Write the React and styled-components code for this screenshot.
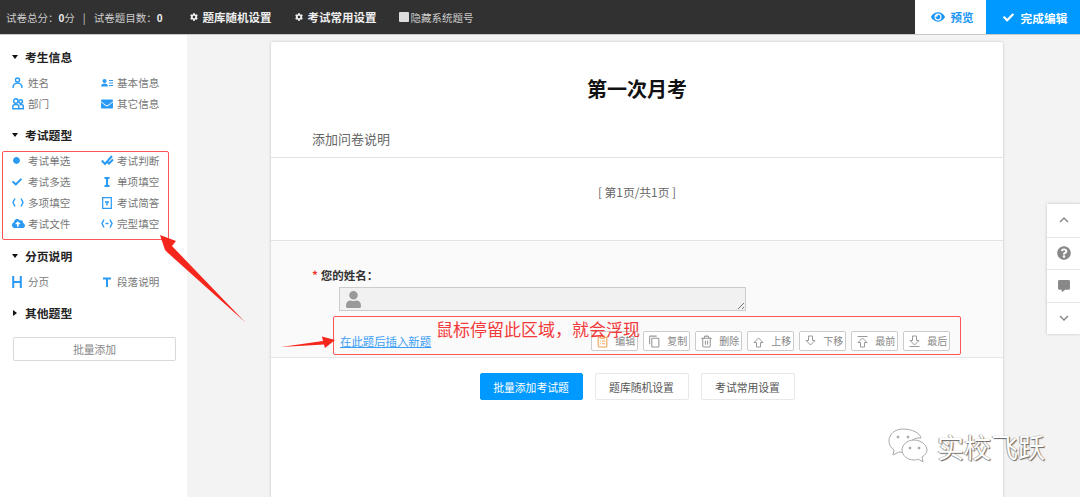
import React from "react";
import styled, { createGlobalStyle } from "styled-components";
import { FaCircle, FaCloudUploadAlt, FaEnvelope, FaCog, FaEye, FaCheck, FaUser, FaQuestionCircle, FaCommentAlt } from "react-icons/fa";
import { MdContentCopy, MdKeyboardArrowUp, MdKeyboardArrowDown } from "react-icons/md";
import { LuTrash2, LuClipboardList } from "react-icons/lu";

const Global = createGlobalStyle`
  html, body { margin: 0; padding: 0; background: #f3f3f3; }
  * { box-sizing: border-box; }
  body { font-family: "Noto Sans CJK SC", "Liberation Sans", sans-serif; }
`;
const Page = styled.div`
  position: relative; width: 1080px; height: 497px; overflow: hidden;
  display: flex; flex-direction: column; background: #f3f3f3;
`;
const TopBar = styled.header`
  height: 35px; flex: none; display: flex; align-items: center; background: #313131;
  border-bottom: 1px solid #c9c9c9; color: #ccc; font-size: 10.5px; padding-left: 6px;
`;
const Stat = styled.span`
  b { color: #eee; font-weight: 700; font-family: "Liberation Sans", sans-serif; }
`;
const Sep = styled.span` margin: 0 8px; `;
const TopLink = styled.span`
  display: inline-flex; align-items: center; gap: 5px; font-weight: 700; font-size: 11.5px; color: #eee;
  margin-left: ${p => p.$ml}px;
  svg { font-size: 8px; }
`;
const Hide = styled.span`
  display: inline-flex; align-items: center; margin-left: 22px; color: #ccc;
  i { width: 10px; height: 10px; background: #ddd; border-radius: 1px; margin-right: 2px; }
`;
const Grow = styled.div` flex: 1; `;
const Preview = styled.div`
  width: 71px; height: 34px; background: #fff; color: #1a96f5; display: flex; align-items: center; justify-content: center;
  gap: 6px; font-size: 11.5px; font-weight: 700; padding-left: 3px; svg { font-size: 14px; }
`;
const Finish = styled.div`
  width: 94px; height: 34px; background: #0099ff; color: #fff; display: flex; align-items: center; justify-content: center;
  gap: 7px; font-size: 11.7px; font-weight: 700; padding-left: 4px; svg { font-size: 11px; }
`;
const Body = styled.div` flex: 1; display: flex; min-height: 0; `;
const Sidebar = styled.aside`
  width: 187px; flex: none; background: #fff; padding: 11px 0 0 12px;
`;
const SecTitle = styled.div`
  height: 21px; display: flex; align-items: center; font-size: 11.8px; font-weight: 700; color: #222;
  margin-bottom: ${p => p.$mb ?? 5}px;
  &::before {
    content: ""; width: 0; height: 0; margin-right: 7px;
    ${p => p.$closed
      ? "border-left: 4px solid #111; border-top: 3px solid transparent; border-bottom: 3px solid transparent; margin-left: 1px; margin-right: 8px;"
      : "border-top: 4px solid #111; border-left: 3px solid transparent; border-right: 3px solid transparent;"}
  }
`;
const ItemGrid = styled.div`
  display: grid; grid-template-columns: 89px 80px; grid-auto-rows: 21px; margin-bottom: ${p => p.$mb ?? 10}px;
`;
const Item = styled.div`
  display: flex; align-items: center; font-size: 10.6px; color: #777;
`;
const Ico = styled.span`
  width: 16px; flex: none; display: flex; align-items: center; color: #2a9af5; font-size: ${p => p.$s || 11}px;
  padding-left: ${p => p.$l ?? 0}px;
`;
const BulkBtn = styled.div`
  width: 163px; height: 24px; margin: 14px 0 0 1px; border: 1px solid #d9d9d9; border-radius: 2px; background: #fff;
  display: flex; align-items: center; justify-content: center; font-size: 10.8px; color: #888;
`;
const Main = styled.main` flex: 1; padding: 7px 0 0 84px; `;
const Card = styled.section`
  width: 732px; height: 470px; background: #fff; border-radius: 2px; box-shadow: 0 0 3px rgba(0,0,0,.2);
  display: flex; flex-direction: column;
`;
const Title = styled.h1`
  margin: 31px 0 0; height: 32px; line-height: 32px; text-align: center; font-size: 20px; font-weight: 700; color: #111;
`;
const Desc = styled.div`
  height: 51px; margin-top: 2px; padding: 22px 0 0 41px; font-size: 13px; color: #666; line-height: 20px;
  border-bottom: 1px solid #e3e3e3;
`;
const PageNo = styled.div`
  height: 83px; display: flex; justify-content: center; padding-top: 25px; font-size: 11.8px; color: #666; line-height: 18px;
  border-bottom: 1px solid #e3e3e3; white-space: pre;
`;
const Question = styled.div`
  height: 117px; background: #fafafa; border-bottom: 1px solid #e6e6e6; padding: 26px 0 0 41px;
`;
const Label = styled.div`
  font-size: 11.5px; font-weight: 700; color: #333; line-height: 16px;
  em { color: #e33; font-style: normal; margin-right: 3px; }
`;
const NameBox = styled.div`
  position: relative; width: 407px; height: 24px; margin: 4px 0 0 27px; background: #f1f1f1; border: 1px solid #ccc;
  display: flex; align-items: center; padding-left: 5px; color: #999; font-size: 17px;
  &::after {
    content: ""; position: absolute; right: 1px; bottom: 1px; width: 7px; height: 7px;
    background: repeating-linear-gradient(135deg, transparent 0 2px, #777 2px 3px);
    clip-path: polygon(100% 0, 100% 100%, 0 100%);
  }
`;
const ActionRow = styled.div`
  display: flex; align-items: center; margin: 20px 0 0 28px; height: 20px; width: 612px;
`;
const InsertLink = styled.a`
  font-size: 11.4px; color: #3c9ff5; text-decoration: underline; margin-right: 160px; white-space: nowrap;
`;
const Tools = styled.div` display: flex; gap: 5px; `;
const Tool = styled.div`
  width: 47px; height: 20px; background: #fff; border: 1px solid #ccc; border-radius: 2px;
  display: flex; align-items: center; padding-left: 4px; gap: 6px; font-size: 10px; line-height: 12px; color: #888;
  svg { flex: none; font-size: 13px; color: ${p => p.$c || "#999"}; }
`;
const Footer = styled.div` display: flex; justify-content: center; gap: 12px; margin-top: 15px; `;
const FootBtn = styled.div`
  height: 27px; width: ${p => p.$w}px; border-radius: 2px; display: flex; align-items: center; justify-content: center;
  font-size: 10.8px; background: ${p => p.$primary ? "#0099ff" : "#fff"}; color: ${p => p.$primary ? "#fff" : "#555"};
  border: 1px solid ${p => p.$primary ? "#0099ff" : "#e8e8e8"};
`;
const SideTools = styled.div`
  position: absolute; left: 1047px; top: 204px; width: 33px; height: 130px; background: #fff;
  box-shadow: 0 0 3px rgba(0,0,0,.2); display: grid; grid-template-rows: repeat(4, 1fr);
`;
const SideCell = styled.div`
  display: flex; align-items: center; justify-content: center; color: #888; font-size: ${p => p.$s || 14}px;
  & + & { border-top: 1px solid #e6e6e6; }
`;
const RedBox = styled.div`
  position: absolute; left: ${p => p.$x}px; top: ${p => p.$y}px; width: ${p => p.$w}px; height: ${p => p.$h}px;
  border: 1px solid #f55; border-radius: 2px; pointer-events: none;
`;
const RedText = styled.div`
  position: absolute; left: 436px; top: 321px; font-size: 17px; line-height: 15px; color: #f23a3a; white-space: nowrap;
`;
const Arrows = styled.svg` position: absolute; left: 0; top: 0; pointer-events: none; `;
const Watermark = styled.div`
  position: absolute; left: 888px; top: 425px; display: flex; align-items: center; gap: 9px;
  font-size: 27px; line-height: 44px; color: #fff; white-space: nowrap;
  text-shadow: 1px 1px 1px #666, -1px 0 0 #aaa, 0 0 1px #888;
`;

const Parens = ({ dash }) => (
  <svg width="12" height="11" viewBox="0 0 12 11" fill="none" stroke="currentColor" strokeWidth="1.4">
    <path d="M3 1.500 1 5.500l2 4M9 1.500l2 4-2 4" />
    {dash && <path d="M4.500 5.500h3" />}
  </svg>
);
const PersonOutline = () => (
  <svg width="11" height="12" viewBox="0 0 11 12" fill="none" stroke="currentColor" strokeWidth="1.500">
    <circle cx="5.500" cy="3" r="2" />
    <path d="M1 11c0-3 2-5 4.500-5S10 8 10 11" />
  </svg>
);
const Group = () => (
  <svg width="12" height="12" viewBox="0 0 12 12" fill="none" stroke="currentColor" strokeWidth="1.400">
    <circle cx="3.800" cy="3" r="2.200" /><circle cx="8.700" cy="3.500" r="1.800" />
    <path d="M.8 10.800V8.500c0-1.300 1-2 3-2s3 .7 3 2v2.300zM7.500 6.500h1.500c1.500 0 2.300.7 2.300 2v2.300H7" />
  </svg>
);
const IdCard = () => (
  <svg width="12" height="10" viewBox="0 0 12 10" fill="currentColor">
    <circle cx="3.500" cy="3" r="2" /><path d="M0 8.500c0-2 1.500-3 3.500-3s3.500 1 3.500 3z" />
    <path d="M8 2h4v1H8zM8 4.500h4v1H8zM8 7h4v1H8z" />
  </svg>
);
const DoubleCheck = () => (
  <svg width="13" height="11" viewBox="0 0 13 11" fill="none" stroke="currentColor" strokeWidth="2">
    <path d="M.8 5.500 4 9l7-8M6 6.500 8 8.500l4-4" />
  </svg>
);
const Cursor = () => (
  <svg width="10" height="10" viewBox="0 0 10 10" fill="none" stroke="currentColor" strokeWidth="2">
    <path d="M2.500 1h5M2.500 9h5M5 1v8" />
  </svg>
);
const FileQ = () => (
  <svg width="10" height="12" viewBox="0 0 10 12" fill="none" stroke="currentColor" strokeWidth="1.200">
    <path d="M.7.7h8.600v10.600H.7z" /><path d="M3 5h4M5 5v3.500" strokeWidth="1.400" />
  </svg>
);
const PageBreak = () => (
  <svg width="10" height="12" viewBox="0 0 10 12" fill="none" stroke="currentColor" strokeWidth="2">
    <path d="M1.200 0v12M8.800 0v12M1.200 6h7.600" />
  </svg>
);
const TIcon = () => (
  <svg width="10" height="10" viewBox="0 0 10 10" fill="none" stroke="currentColor" strokeWidth="2">
    <path d="M1 1.500h8M5 1.500V10" />
  </svg>
);
const HollowUp = ({ bar }) => (
  <svg width="13" height="13" viewBox="0 0 13 13" fill="none" stroke="currentColor" strokeWidth="1">
    {bar && <path d="M1.500 1.500h10" />}
    <path d="M6.500 3 2 7.500h2.500V12h4V7.500H11z" />
  </svg>
);
const HollowDown = ({ bar }) => (
  <svg width="13" height="13" viewBox="0 0 13 13" fill="none" stroke="currentColor" strokeWidth="1">
    {bar && <path d="M1.500 11.500h10" />}
    <path d="M6.500 10 2 5.500h2.500V1h4v4.500H11z" />
  </svg>
);
const Chat = () => (
  <svg width="40" height="38" viewBox="0 0 40 38" fill="#fff" stroke="#aaa" strokeWidth="1">
    <path d="M15 1C7 1 1 6 1 13c0 4 2 7 5 9l-1 5 6-3c6 1 9 0 11-1-4-8 3-14 11-13C32 5 24 1 15 1z" />
    <circle cx="10" cy="9" r="1" fill="#999" /><circle cx="20" cy="9" r="1" fill="#999" />
    <path d="M26 12c-7 0-12 5-12 10s5 10 12 10c2 0 3 0 4-1l5 3-1-5c3-2 5-4 5-7 0-5-6-10-13-10z" />
    <circle cx="22" cy="20" r="1" fill="#999" /><circle cx="31" cy="20" r="1" fill="#999" />
  </svg>
);

const Entry = ({ icon, s, l, children }) => (
  <Item><Ico $s={s} $l={l}>{icon}</Ico>{children}</Item>
);

export default function App() {
  return (
    <Page>
      <Global />
      <TopBar>
        <Stat>{"试卷总分\uFF1A"}<b>0</b>分</Stat>
        <Sep>|</Sep>
        <Stat>{"试卷题目数\uFF1A"}<b>0</b></Stat>
        <TopLink $ml={27}><FaCog />题库随机设置</TopLink>
        <TopLink $ml={23}><FaCog />考试常用设置</TopLink>
        <Hide><i />隐藏系统题号</Hide>
        <Grow />
        <Preview><FaEye />预览</Preview>
        <Finish><FaCheck />完成编辑</Finish>
      </TopBar>
      <Body>
        <Sidebar>
          <SecTitle>考生信息</SecTitle>
          <ItemGrid>
            <Entry icon={<PersonOutline />}>姓名</Entry>
            <Entry icon={<IdCard />}>基本信息</Entry>
            <Entry icon={<Group />}>部门</Entry>
            <Entry icon={<FaEnvelope />} s={12}>其它信息</Entry>
          </ItemGrid>
          <SecTitle>考试题型</SecTitle>
          <ItemGrid $mb={11}>
            <Entry icon={<FaCircle />} s={7} l={1}>考试单选</Entry>
            <Entry icon={<DoubleCheck />}>考试判断</Entry>
            <Entry icon={<FaCheck />} s={10}>考试多选</Entry>
            <Entry icon={<Cursor />} l={1}>单项填空</Entry>
            <Entry icon={<Parens />}>多项填空</Entry>
            <Entry icon={<FileQ />} l={1}>考试简答</Entry>
            <Entry icon={<FaCloudUploadAlt />} s={13}>考试文件</Entry>
            <Entry icon={<Parens dash />}>完型填空</Entry>
          </ItemGrid>
          <SecTitle>分页说明</SecTitle>
          <ItemGrid>
            <Entry icon={<PageBreak />}>分页</Entry>
            <Entry icon={<TIcon />} l={1}>段落说明</Entry>
          </ItemGrid>
          <SecTitle $closed $mb={0}>其他题型</SecTitle>
          <BulkBtn>批量添加</BulkBtn>
        </Sidebar>
        <Main>
          <Card>
            <Title>第一次月考</Title>
            <Desc>添加问卷说明</Desc>
            <PageNo>{"[ 第1页/共1页 ]"}</PageNo>
            <Question>
              <Label><em>*</em>{"您的姓名\uFF1A"}</Label>
              <NameBox><FaUser /></NameBox>
              <ActionRow>
                <InsertLink>在此题后插入新题</InsertLink>
                <Tools>
                  <Tool $c="#f0a050"><LuClipboardList />编辑</Tool>
                  <Tool><MdContentCopy />复制</Tool>
                  <Tool><LuTrash2 />删除</Tool>
                  <Tool><HollowUp />上移</Tool>
                  <Tool><HollowDown />下移</Tool>
                  <Tool><HollowUp bar />最前</Tool>
                  <Tool><HollowDown bar />最后</Tool>
                </Tools>
              </ActionRow>
            </Question>
            <Footer>
              <FootBtn $primary $w={103}>批量添加考试题</FootBtn>
              <FootBtn $w={94}>题库随机设置</FootBtn>
              <FootBtn $w={94}>考试常用设置</FootBtn>
            </Footer>
          </Card>
        </Main>
      </Body>
      <SideTools>
        <SideCell $s={18}><MdKeyboardArrowUp /></SideCell>
        <SideCell $s={14}><FaQuestionCircle /></SideCell>
        <SideCell $s={12}><FaCommentAlt /></SideCell>
        <SideCell $s={18}><MdKeyboardArrowDown /></SideCell>
      </SideTools>
      <RedBox $x={2} $y={151} $w={167} $h={89} />
      <RedBox $x={333} $y={316} $w={628} $h={39} />
      <RedText>{"鼠标停留此区域\uFF0C就会浮现"}</RedText>
      <Arrows width="1080" height="497" viewBox="0 0 1080 497">
        <path d="M160 235 176 241 172 246 245 322 168 253 165 250z" fill="#f5261c" />
        <path d="M335 340 322 336.500 323 341 281 347 324 344.500 325 348z" fill="#f5261c" />
      </Arrows>
      <Watermark><Chat />实校飞跃</Watermark>
    </Page>
  );
}
